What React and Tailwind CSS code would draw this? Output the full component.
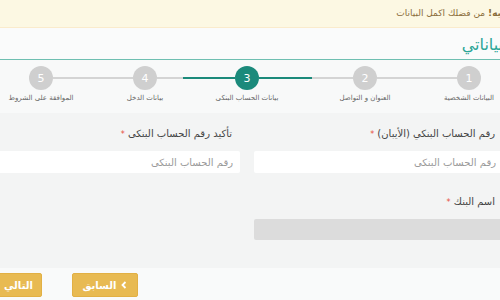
import React from "react";

function Circle({ n, active }) {
  return (
    <div
      className={
        "w-[24px] h-[24px] rounded-full flex items-center justify-center text-white text-[11px] leading-none " +
        (active ? "bg-[#1b8a7b]" : "bg-[#cfcfcf]")
      }
    >
      {n}
    </div>
  );
}

function Step({ n, label, active }) {
  return (
    <div className="w-[24px] flex flex-col items-center shrink-0">
      <Circle n={n} active={active} />
      <div className="mt-[3px] whitespace-nowrap text-[7px] leading-[10px] text-[#666]">{label}</div>
    </div>
  );
}

function Line({ parts }) {
  return (
    <div className="flex h-[24px] items-center shrink-0">
      {parts.map((p, i) => (
        <div
          key={i}
          className={"h-[2px] " + (p.teal ? "bg-[#1b8a7b]" : "bg-[#d4d4d4]")}
          style={{ width: p.w }}
        />
      ))}
    </div>
  );
}

function Label({ children }) {
  return (
    <div className="text-[10px] leading-[13px] text-[#444] pr-[8px]">
      {children} <span className="text-[#e74c3c] text-[8px]">*</span>
    </div>
  );
}

export default function App() {
  return (
    <div className="w-[500px] h-[300px] overflow-hidden bg-[#f9fafa] font-['DejaVu_Sans',sans-serif]">
      <div dir="rtl" className="w-[545px] ml-[-30px] h-[300px] flex flex-col">
        <div className="h-[28px] shrink-0 bg-[#fcf8e3] border-b border-[#faebcc] flex items-center pr-[3px] text-[9px] text-[#8a6d3b]">
          <span>
            <b>تنبيه!</b> من فضلك اكمل البيانات
          </span>
        </div>
        <div className="h-[32px] shrink-0 bg-[#fafbfb] border-b-[1.5px] border-[#6fbfb1] flex items-center pr-[12px] pt-[2px] text-[16px] text-[#2aa596]">
          بياناتي
        </div>
        <div className="h-[53px] shrink-0 bg-[#f8f9f9] flex pt-[6px] pr-[34px]">
          <Step n="1" label="البيانات الشخصية" />
          <Line parts={[{ w: 80 }]} />
          <Step n="2" label="العنوان و التواصل" />
          <Line parts={[{ w: 41 }, { w: 53, teal: true }]} />
          <Step n="3" label="بيانات الحساب البنكى" active />
          <Line parts={[{ w: 52, teal: true }, { w: 26 }]} />
          <Step n="4" label="بيانات الدخل" />
          <Line parts={[{ w: 80 }]} />
          <Step n="5" label="الموافقة على الشروط" />
        </div>
        <div className="h-[155px] shrink-0 bg-[#f3f4f4] pr-[12px] pl-[21px] pt-[14px] grid grid-cols-2 gap-x-[14px] content-start">
          <div className="flex flex-col">
            <Label>رقم الحساب البنكي (الأيبان)</Label>
            <input
              className="mt-[10px] h-[22px] bg-white rounded-[2px] pr-[7px] text-[10px] outline-none placeholder:text-[#9a9a9a]"
              placeholder="رقم الحساب البنكي"
            />
          </div>
          <div className="flex flex-col">
            <Label>تأكيد رقم الحساب البنكى</Label>
            <input
              className="mt-[10px] h-[22px] bg-white rounded-[2px] pr-[7px] text-[10px] outline-none placeholder:text-[#9a9a9a]"
              placeholder="رقم الحساب البنكي"
            />
          </div>
          <div className="flex flex-col mt-[22px]">
            <Label>اسم البنك</Label>
            <div className="mt-[10px] h-[21px] bg-[#dcdcdc] rounded-[2px]" />
          </div>
        </div>
        <div className="flex-1 bg-[#f9fafa] flex justify-end items-start pt-[5px] pl-[14px] gap-[30px]">
          <button className="w-[66px] h-[24px] bg-[#e8ba52] border border-[#e2b044] rounded-[2px] text-white text-[10px] font-bold flex items-center justify-center gap-[5px]">
            <svg width="6" height="8" viewBox="0 0 6 8" className="shrink-0">
              <path d="M4.5 1 L1.5 4 L4.5 7" stroke="white" strokeWidth="1.8" fill="none" />
            </svg>
            <span>السابق</span>
          </button>
          <button className="h-[24px] bg-[#e8ba52] border border-[#e2b044] rounded-[2px] text-white text-[10px] font-bold flex items-center pr-[8px] pl-[8px] gap-[5px]">
            <span>التالي</span>
            <svg width="6" height="8" viewBox="0 0 6 8" className="shrink-0">
              <path d="M1.5 1 L4.5 4 L1.5 7" stroke="white" strokeWidth="1.8" fill="none" />
            </svg>
          </button>
        </div>
      </div>
    </div>
  );
}
